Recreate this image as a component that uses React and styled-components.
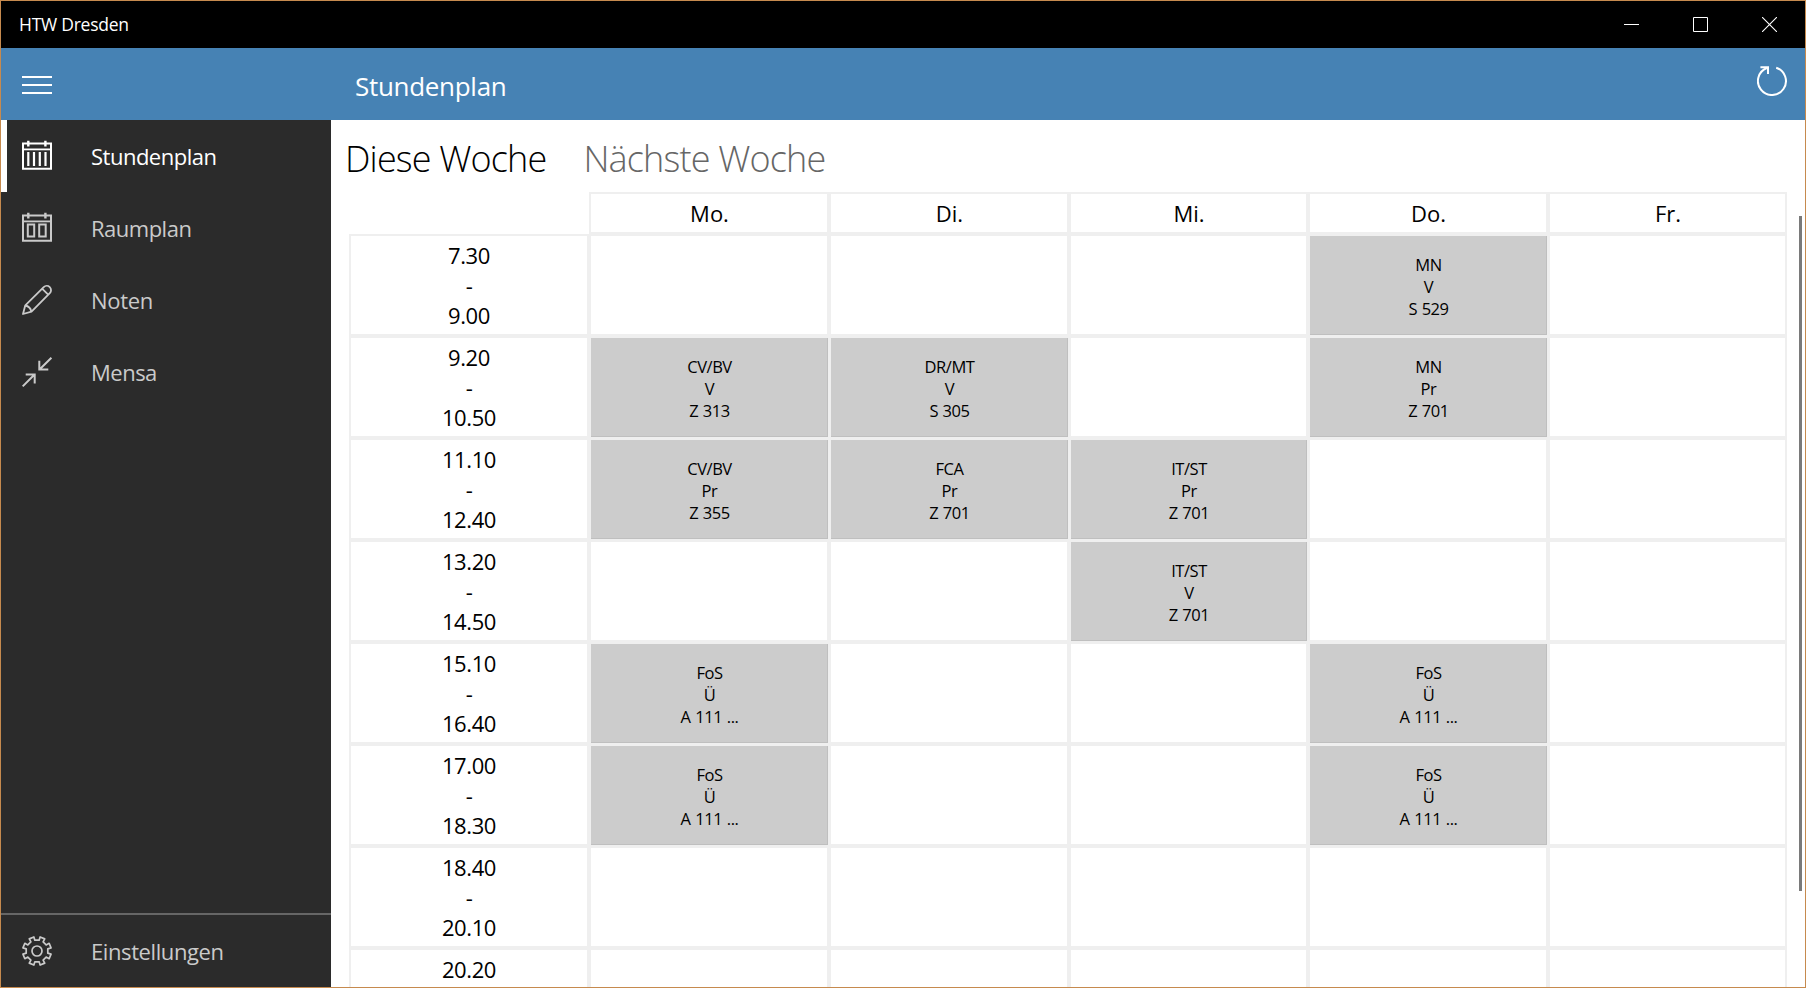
import React from 'react';
import styled, { createGlobalStyle } from 'styled-components';

const Global = createGlobalStyle`
  *, *::before, *::after { box-sizing: border-box; }
  body {
    margin: 0;
    overflow: hidden;
    font-family: 'Open Sans', 'Noto Sans', sans-serif;
    color: #000;
    background: #fff;
  }
  button {
    border: 0;
    padding: 0;
    background: none;
    font: inherit;
    color: inherit;
  }
`;

const Window = styled.div`
  width: 1806px;
  height: 988px;
  border: 1px solid #c68a4e;
  display: flex;
  flex-direction: column;
  background: #fff;
  overflow: hidden;
`;

const TitleBar = styled.header`
  height: 47px;
  flex: none;
  background: #000;
  color: #fff;
  display: flex;
  align-items: center;
  justify-content: space-between;
  padding: 0 1px 0 18px;
`;

const WindowTitle = styled.span`
  font-size: 17.5px;
  letter-spacing: -0.25px;
  padding-bottom: 2px;
`;

const WindowButtons = styled.div`
  display: flex;
`;

const WindowButton = styled.button`
  width: 69px;
  height: 47px;
  display: flex;
  align-items: center;
  justify-content: center;
`;

const AppBar = styled.div`
  height: 72px;
  flex: none;
  background: #4682b4;
  color: #fff;
  display: flex;
`;

const MenuButton = styled.button`
  width: 72px;
  height: 72px;
  padding: 28px 0 0 21px;
  display: flex;
  flex-direction: column;
  gap: 6px;
`;

const MenuLine = styled.span`
  width: 30px;
  height: 2px;
  background: #fff;
`;

const PageTitle = styled.h1`
  margin: 0 0 0 282px;
  flex: 1;
  font-size: 26px;
  font-weight: 400;
  line-height: 77px;
  letter-spacing: -0.3px;
`;

const RefreshButton = styled.button`
  width: 67px;
  height: 66px;
  display: flex;
  align-items: center;
  justify-content: center;
`;

const Body = styled.div`
  flex: 1;
  min-height: 0;
  display: flex;
`;

const Nav = styled.nav`
  width: 330px;
  flex: none;
  background: #2b2b2b;
  display: flex;
  flex-direction: column;
`;

const NavItem = styled.button`
  height: 72px;
  width: 100%;
  display: flex;
  align-items: center;
  text-align: left;
  border-left: 6px solid ${(p) => (p.$active ? '#fff' : 'transparent')};
  padding-left: 15px;
  color: ${(p) => (p.$active ? '#fff' : '#cacaca')};
  svg { flex: none; overflow: visible; }
`;

const NavLabel = styled.span`
  margin-left: 39px;
  font-size: 22px;
  line-height: 30px;
  letter-spacing: ${(p) => p.$tracking ?? -0.5}px;
`;

const NavFooter = styled.div`
  margin-top: auto;
  border-top: 2px solid #666;
`;

const Main = styled.main`
  flex: 1;
  min-width: 0;
  display: flex;
  justify-content: space-between;
`;

const Content = styled.section`
  margin-left: 18px;
  width: 1438px;
`;

const PivotTabs = styled.div`
  height: 72px;
  display: flex;
  gap: 37px;
  margin-left: -4px;
`;

const PivotTab = styled.button`
  font-size: 36px;
  font-weight: 300;
  line-height: 49px;
  padding-top: 14px;
  align-self: flex-start;
  white-space: nowrap;
  letter-spacing: -0.83px;
  color: ${(p) => (p.$active ? '#000' : '#666')};
`;

const Timetable = styled.div`
  display: grid;
  grid-template-columns: 240px 240px 240px 239px 240px 239px;
  grid-template-rows: 42px;
  grid-auto-rows: 102px;
`;

const Cell = styled.div`
  border: 2px solid #efefef;
  display: flex;
  flex-direction: column;
  align-items: center;
  justify-content: center;
  white-space: pre;
  text-align: center;
`;

const DayCell = styled(Cell)`
  padding-left: 1px;
  font-size: 22px;
  line-height: 30px;
`;

const TimeCell = styled(Cell)`
  justify-content: flex-start;
  padding-top: 4px;
  font-size: 22px;
  line-height: 30px;
  letter-spacing: -0.4px;
`;

const LessonCell = styled(Cell)`
  border-right-width: 1px;
  border-bottom-width: 1px;
  background: #ccc;
  box-shadow: inset -1px -1px #bfbfbf;
  padding-top: 2px;
  font-size: 16.5px;
  line-height: 22px;
  letter-spacing: -0.45px;
  word-spacing: 0.8px;
`;

const ScrollTrack = styled.div`
  width: 6px;
  padding-top: 96px;
`;

const ScrollThumb = styled.div`
  width: 3px;
  height: 675px;
  background: #7a7a7a;
`;

const CalendarFrame = ({ children }) => (
  <svg width="30" height="30" viewBox="0 0 30 30" fill="none" stroke="currentColor">
    <path d="M1 2.5H29V27.7H1Z" strokeWidth="2" />
    <path d="M1 8.4H29" strokeWidth="1.8" />
    <path d="M6.3 -0.2V5.6M23.4 -0.2V5.6" strokeWidth="2.4" />
    {children}
  </svg>
);

const TimetableIcon = () => (
  <CalendarFrame>
    <path d="M6.3 11V25M12 11V25M17.8 11V25M23.5 11V25" strokeWidth="2.2" />
  </CalendarFrame>
);

const RoomIcon = () => (
  <CalendarFrame>
    <path d="M5.8 11.5H12.2V23.5H5.8ZM17.2 11.5H23.7V23.5H17.2Z" strokeWidth="2" />
  </CalendarFrame>
);

const PencilIcon = () => (
  <svg width="30" height="30" viewBox="0 0 30 30" fill="none" stroke="currentColor" strokeWidth="1.8" strokeLinejoin="round">
    <path d="M1 29L3.3 20.3L21.7 2.2A4.1 4.1 0 0 1 27.8 8.2L9.5 26.6Z" />
    <path d="M3.3 20.5Q8.2 21.5 9.3 26.4M20.3 3.8L26.2 9.7" />
  </svg>
);

const ArrowsIcon = () => (
  <svg width="30" height="30" viewBox="0 0 30 30" fill="none" stroke="currentColor" strokeWidth="2">
    <path d="M29.4 0.7L17.8 12.2M17.3 3.7V12.4H26.3" />
    <path d="M0.7 29.4L12.3 17.8M3.7 17.6H12.7V26.5" />
  </svg>
);

const gearTeeth = 8;
const gearPoint = (radius, turn) => {
  const angle = turn * Math.PI * 2 - Math.PI / 2;
  return `${(15 + radius * Math.cos(angle)).toFixed(2)} ${(15 + radius * Math.sin(angle)).toFixed(2)}`;
};
const gearOutline = Array.from({ length: gearTeeth }, (_, i) => {
  const at = (offset) => (i + 0.5 + offset) / gearTeeth;
  return [
    gearPoint(11, at(-0.25)),
    gearPoint(14.4, at(-0.22)),
    gearPoint(14.4, at(0.22)),
    gearPoint(11, at(0.25)),
    gearPoint(10.8, at(0.5)),
  ].join('L');
}).join('L');

const GearIcon = () => (
  <svg width="30" height="30" viewBox="0 0 30 30" fill="none" stroke="currentColor" strokeWidth="1.7" strokeLinejoin="round">
    <path d={`M${gearOutline}Z`} />
    <circle cx="15" cy="15" r="5" />
  </svg>
);

const RefreshIcon = () => (
  <svg width="30" height="30" viewBox="0 0 30 30" fill="none" stroke="currentColor" strokeWidth="2">
    <path d="M19.2 1.7A14 14 0 1 1 9.8 2" />
    <path d="M3.4 1.2H11V8" />
  </svg>
);

const MinimizeIcon = () => (
  <svg width="15" height="15" viewBox="0 0 15 15" stroke="#fff"><path d="M0 7.5H15" /></svg>
);
const MaximizeIcon = () => (
  <svg width="15" height="15" viewBox="0 0 15 15" fill="none" stroke="#fff"><path d="M.5 .5H14.5V14.5H.5Z" /></svg>
);
const CloseIcon = () => (
  <svg width="15" height="15" viewBox="0 0 15 15" stroke="#fff" strokeWidth="1.1"><path d="M0 0L15 15M15 0L0 15" /></svg>
);

const navItems = [
  { label: 'Stundenplan', Icon: TimetableIcon, active: true },
  { label: 'Raumplan', Icon: RoomIcon },
  { label: 'Noten', Icon: PencilIcon, tracking: -0.3 },
  { label: 'Mensa', Icon: ArrowsIcon },
];

const days = ['Mo.', 'Di.', 'Mi.', 'Do.', 'Fr.'];

const rows = [
  { time: ['7.30', '-', '9.00'], lessons: { 3: ['MN', 'V', 'S 529'] } },
  { time: ['9.20', '-', '10.50'], lessons: { 0: ['CV/BV', 'V', 'Z 313'], 1: ['DR/MT', 'V', 'S 305'], 3: ['MN', 'Pr', 'Z 701'] } },
  { time: ['11.10', '-', '12.40'], lessons: { 0: ['CV/BV', 'Pr', 'Z 355'], 1: ['FCA', 'Pr', 'Z 701'], 2: ['IT/ST', 'Pr', 'Z 701'] } },
  { time: ['13.20', '-', '14.50'], lessons: { 2: ['IT/ST', 'V', 'Z 701'] } },
  { time: ['15.10', '-', '16.40'], lessons: { 0: ['FoS', 'Ü', 'A 111 ...'], 3: ['FoS', 'Ü', 'A 111 ...'] } },
  { time: ['17.00', '-', '18.30'], lessons: { 0: ['FoS', 'Ü', 'A 111 ...'], 3: ['FoS', 'Ü', 'A 111 ...'] } },
  { time: ['18.40', '-', '20.10'], lessons: {} },
  { time: ['20.20'], lessons: {} },
];

export default function App() {
  return (
    <>
      <Global />
      <Window>
        <TitleBar>
          <WindowTitle>HTW Dresden</WindowTitle>
          <WindowButtons>
            <WindowButton aria-label="Minimieren"><MinimizeIcon /></WindowButton>
            <WindowButton aria-label="Maximieren"><MaximizeIcon /></WindowButton>
            <WindowButton aria-label="Schließen"><CloseIcon /></WindowButton>
          </WindowButtons>
        </TitleBar>
        <AppBar>
          <MenuButton aria-label="Menü"><MenuLine /><MenuLine /><MenuLine /></MenuButton>
          <PageTitle>Stundenplan</PageTitle>
          <RefreshButton aria-label="Aktualisieren"><RefreshIcon /></RefreshButton>
        </AppBar>
        <Body>
          <Nav>
            {navItems.map(({ label, Icon, active, tracking }) => (
              <NavItem key={label} $active={active}><Icon /><NavLabel $tracking={tracking}>{label}</NavLabel></NavItem>
            ))}
            <NavFooter>
              <NavItem><GearIcon /><NavLabel $tracking={-0.4}>Einstellungen</NavLabel></NavItem>
            </NavFooter>
          </Nav>
          <Main>
            <Content>
              <PivotTabs>
                <PivotTab $active>Diese Woche</PivotTab>
                <PivotTab>Nächste Woche</PivotTab>
              </PivotTabs>
              <Timetable>
                <div />
                {days.map((day) => <DayCell key={day}>{day}</DayCell>)}
                {rows.map(({ time, lessons }) => (
                  <React.Fragment key={time[0]}>
                    <TimeCell>{time.join('\n')}</TimeCell>
                    {days.map((day, i) =>
                      lessons[i]
                        ? <LessonCell key={day}>{lessons[i].join('\n')}</LessonCell>
                        : <Cell key={day} />
                    )}
                  </React.Fragment>
                ))}
              </Timetable>
            </Content>
            <ScrollTrack><ScrollThumb /></ScrollTrack>
          </Main>
        </Body>
      </Window>
    </>
  );
}
